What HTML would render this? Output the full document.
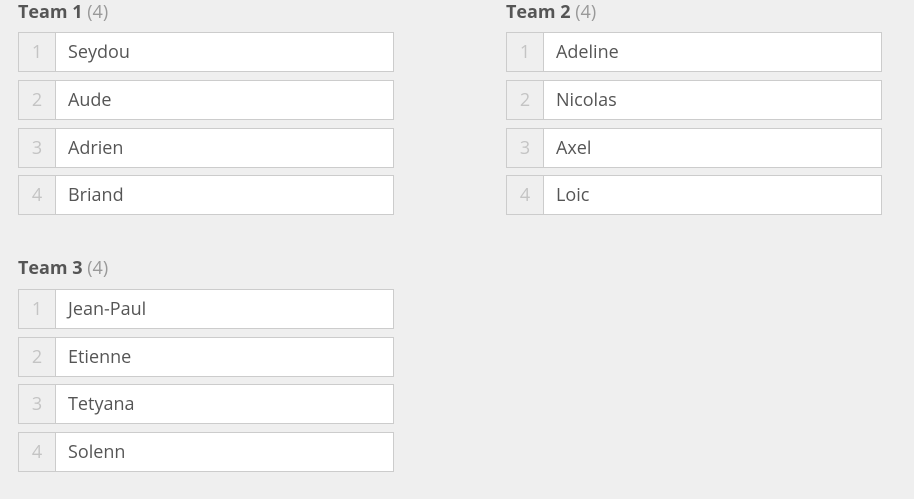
<!DOCTYPE html>
<html><head><style>
body{margin:0;width:914px;height:499px;background:#efefef;font-family:"Open Sans","Liberation Sans",sans-serif;position:relative;overflow:hidden}
.t{position:absolute;font-size:18px;font-weight:bold;color:#555;line-height:20px}
.t span{font-weight:normal;color:#999}
.r{position:absolute;width:374px;height:38px;border:1px solid #ccc;background:#fff;display:flex}
.n{width:36px;border-right:1px solid #ccc;background:#efefef;color:#c4c4c4;font-size:18px;text-align:center;line-height:38px}
.m{padding-left:12px;color:#555;font-size:18px;line-height:38px}
</style></head><body>
<div class="t" style="left:18px;top:2px">Team 1 <span>(4)</span></div>
<div class="t" style="left:506px;top:2px">Team 2 <span>(4)</span></div>
<div class="t" style="left:18px;top:258px">Team 3 <span>(4)</span></div>

<div class="r" style="left:18px;top:32px"><div class="n">1</div><div class="m">Seydou</div></div>
<div class="r" style="left:18px;top:80px"><div class="n">2</div><div class="m">Aude</div></div>
<div class="r" style="left:18px;top:128px"><div class="n">3</div><div class="m">Adrien</div></div>
<div class="r" style="left:18px;top:175px"><div class="n">4</div><div class="m">Briand</div></div>

<div class="r" style="left:506px;top:32px"><div class="n">1</div><div class="m">Adeline</div></div>
<div class="r" style="left:506px;top:80px"><div class="n">2</div><div class="m">Nicolas</div></div>
<div class="r" style="left:506px;top:128px"><div class="n">3</div><div class="m">Axel</div></div>
<div class="r" style="left:506px;top:175px"><div class="n">4</div><div class="m">Loic</div></div>

<div class="r" style="left:18px;top:289px"><div class="n">1</div><div class="m">Jean-Paul</div></div>
<div class="r" style="left:18px;top:337px"><div class="n">2</div><div class="m">Etienne</div></div>
<div class="r" style="left:18px;top:384px"><div class="n">3</div><div class="m">Tetyana</div></div>
<div class="r" style="left:18px;top:432px"><div class="n">4</div><div class="m">Solenn</div></div>
</body></html>
